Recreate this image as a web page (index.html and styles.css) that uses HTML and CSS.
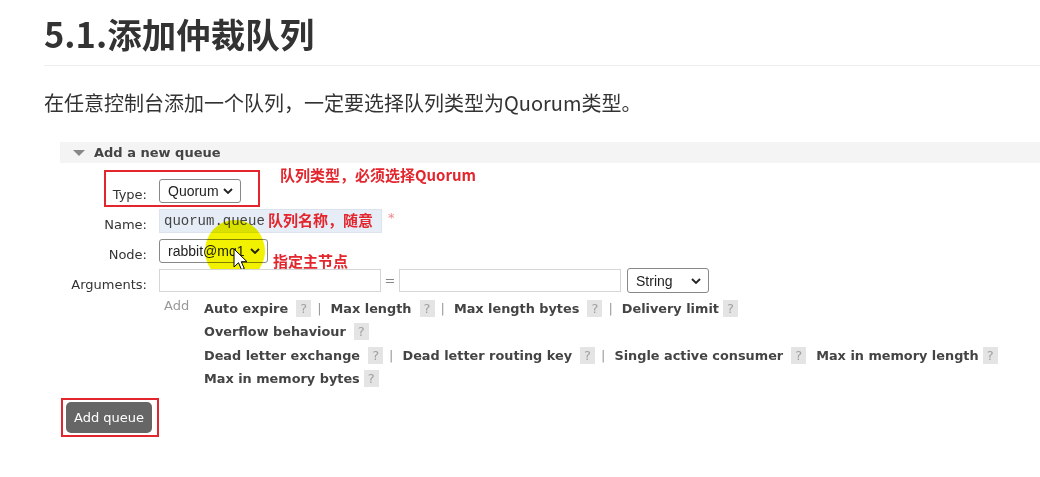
FILE: index.html
```html
<!DOCTYPE html>
<html lang="zh-CN">
<head>
  <meta charset="UTF-8" />
  <title>5.1.添加仲裁队列</title>
  <link rel="stylesheet" href="styles.css">
</head>
<body>
  <div class="page">
    <h1 class="title">5.1.添加仲裁队列</h1>
    <p class="intro">在任意控制台添加一个队列，一定要选择队列类型为Quorum类型。</p>

    <div class="panel">
      <div class="panel-head"><span class="tri"></span>Add a new queue</div>

      <div class="form">
        <div class="row">
          <span class="mark mark-type"></span>
          <label>Type:</label>
          <div class="select sel-type">Quorum
            <svg class="chev" width="10" height="6" viewBox="0 0 10 6"><path d="M1 1l4 4 4-4" fill="none" stroke="#222" stroke-width="1.8"/></svg>
          </div>
          <span class="note note-type">队列类型，必须选择Quorum</span>
        </div>

        <div class="row">
          <label>Name:</label>
          <div class="input input-name">quorum.queue</div>
          <span class="req">*</span>
          <span class="note note-name">队列名称，随意</span>
        </div>

        <div class="row">
          <label>Node:</label>
          <div class="select sel-node">rabbit@mq1
            <svg class="chev" width="10" height="6" viewBox="0 0 10 6"><path d="M1 1l4 4 4-4" fill="none" stroke="#223" stroke-width="1.8"/></svg>
          </div>
          <span class="note note-node">指定主节点</span>
          <span class="spot"></span>
          <svg class="cursor" width="14" height="23" viewBox="0 0 14 23">
            <path d="M1 1v18l4.5-4.3 3 7 2.8-1.2-3-6.8H14z" fill="#fff" stroke="#000" stroke-width="1" stroke-linejoin="round"/>
          </svg>
        </div>

        <div class="row">
          <label>Arguments:</label>
          <div class="input input-arg"></div>
          <span class="eq">=</span>
          <div class="input input-arg"></div>
          <div class="select sel-string">String
            <svg class="chev" width="10" height="6" viewBox="0 0 10 6"><path d="M1 1l4 4 4-4" fill="none" stroke="#222" stroke-width="1.8"/></svg>
          </div>
        </div>

        <div class="adds">
          <span class="add-label">Add</span>
          <div class="arg-lines">
            <div class="arg-line">
              <span class="arg">Auto expire</span><span class="help">?</span><span class="sep">|</span>
              <span class="arg">Max length</span><span class="help">?</span><span class="sep">|</span>
              <span class="arg">Max length bytes</span><span class="help">?</span><span class="sep">|</span>
              <span class="arg">Delivery limit</span><span class="help tight">?</span>
            </div>
            <div class="arg-line">
              <span class="arg">Overflow behaviour</span><span class="help">?</span>
            </div>
            <div class="arg-line">
              <span class="arg">Dead letter exchange</span><span class="help">?</span><span class="sep">|</span>
              <span class="arg">Dead letter routing key</span><span class="help">?</span><span class="sep">|</span>
              <span class="arg">Single active consumer</span><span class="help">?</span>
              <span class="arg gap">Max in memory length</span><span class="help tight">?</span>
            </div>
            <div class="arg-line">
              <span class="arg">Max in memory bytes</span><span class="help tight">?</span>
            </div>
          </div>
        </div>

        <div class="actions">
          <div class="btn-mark">
            <button class="btn">Add queue</button>
          </div>
        </div>
      </div>
    </div>
  </div>
</body>
</html>
```

FILE: styles.css
```css
body {
  margin: 0;
  background: #fff;
  font-family: "DejaVu Sans", Verdana, sans-serif;
  color: #333;
}
.page {
  padding: 11px 0 0 44px;
}
.title {
  margin: 0;
  padding-bottom: 9px;
  font-family: "Noto Sans CJK SC", sans-serif;
  font-size: 34.5px;
  line-height: 45px;
  font-weight: 700;
  color: #333;
  border-bottom: 1px solid #eee;
}
.intro {
  margin: 21px 0 0;
  font-family: "Noto Sans CJK SC", sans-serif;
  font-size: 20px;
  line-height: 31px;
  color: #333;
}
.panel {
  margin: 24px 0 0 16px;
}
.panel-head {
  display: flex;
  align-items: center;
  height: 21px;
  background: #f4f4f4;
  font-size: 13px;
  font-weight: 700;
  color: #444;
}
.tri {
  width: 0;
  height: 0;
  margin: 0 9px 0 13px;
  border-left: 6px solid transparent;
  border-right: 6px solid transparent;
  border-top: 6px solid #888;
}
.form {
  padding-top: 16px;
}
.row {
  position: relative;
  display: flex;
  align-items: flex-start;
  height: 24px;
  margin-bottom: 6px;
}
.row label {
  width: 87px;
  margin-right: 12px;
  padding-top: 8px;
  text-align: right;
  font-size: 13px;
  line-height: 16px;
  color: #333;
}
.select {
  display: flex;
  align-items: center;
  justify-content: space-between;
  box-sizing: border-box;
  height: 24px;
  padding: 0 7px 0 8px;
  border: 1px solid #888;
  border-radius: 3px;
  background: #fff;
  font-family: "Liberation Sans", Arial, sans-serif;
  font-size: 14px;
  color: #222;
}
.sel-type { width: 82px; }
.sel-node { width: 109px; }
.sel-string { width: 82px; margin-left: 6px; margin-top: -1px; height: 25px; }
.input {
  box-sizing: border-box;
  height: 24px;
  border: 1px solid #d6d6d6;
  background: #fff;
}
.input-name {
  width: 223px;
  padding-left: 4px;
  background: #e6edf7;
  border-color: #dde3ec;
  font-family: "Liberation Mono", "Courier New", monospace;
  font-size: 14px;
  line-height: 22px;
  color: #444;
}
.input-arg {
  width: 222px;
  height: 23px;
}
.eq {
  width: 18px;
  text-align: center;
  font-size: 13px;
  line-height: 24px;
  color: #888;
}
.req {
  margin-left: 6px;
  font-size: 13px;
  line-height: 18px;
  color: #e88;
}
.note {
  position: absolute;
  font-family: "Noto Sans CJK SC", sans-serif;
  font-size: 15px;
  line-height: 20px;
  font-weight: 700;
  color: #e3262d;
  white-space: nowrap;
}
.note-type { left: 220px; top: -14px; }
.note-name { left: 208px; top: 1px; }
.note-node { left: 213px; top: 12px; }
.mark {
  position: absolute;
  box-sizing: border-box;
  border: 2px solid #e3262d;
}
.mark-type { left: 44px; top: -9px; width: 156px; height: 37px; }
.spot {
  position: absolute;
  left: 145px;
  top: -19px;
  width: 60px;
  height: 62px;
  border-radius: 50%;
  background: #f2f200;
  mix-blend-mode: multiply;
}
.cursor {
  position: absolute;
  left: 173px;
  top: 9px;
}
.adds {
  display: flex;
  margin-top: -2px;
  padding-left: 104px;
}
.add-label {
  width: 40px;
  font-size: 13px;
  line-height: 17px;
  color: #999;
}
.arg-line {
  display: flex;
  align-items: center;
  height: 23.3px;
  white-space: nowrap;
}
.arg {
  font-size: 12.85px;
  font-weight: 700;
  color: #444;
}
.arg.gap { margin-left: 10px; }
.help {
  width: 15px;
  height: 17px;
  margin-left: 8px;
  background: #e4e4e4;
  font-size: 13px;
  line-height: 17px;
  text-align: center;
  color: #a0a0a0;
}
.help.tight { margin-left: 4px; }
.sep {
  margin: 0 9px 0 6px;
  font-size: 13px;
  color: #999;
}
.actions {
  padding: 8px 0 0 1px;
}
.btn-mark {
  display: inline-block;
  padding: 2px 5px 2px 3px;
  border: 2px solid #e3262d;
}
.btn {
  display: block;
  width: 86px;
  height: 31px;
  padding: 0;
  border: none;
  border-radius: 5px;
  background: #666;
  color: #fff;
  font-family: "DejaVu Sans", Verdana, sans-serif;
  font-size: 13px;
}
```
